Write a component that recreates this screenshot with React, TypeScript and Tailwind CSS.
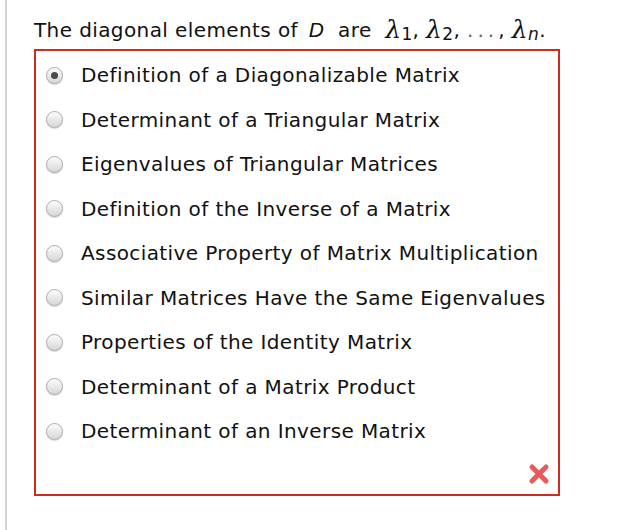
import React from "react";

const options = [
  "Definition of a Diagonalizable Matrix",
  "Determinant of a Triangular Matrix",
  "Eigenvalues of Triangular Matrices",
  "Definition of the Inverse of a Matrix",
  "Associative Property of Matrix Multiplication",
  "Similar Matrices Have the Same Eigenvalues",
  "Properties of the Identity Matrix",
  "Determinant of a Matrix Product",
  "Determinant of an Inverse Matrix",
];

function Radio({ checked }: { checked: boolean }) {
  return (
    <span className="relative flex h-[17px] w-[17px] items-center justify-center rounded-full border border-[#ababab] bg-gradient-to-b from-[#fdfdfd] to-[#d6d6d6] shadow-[0_1px_1px_rgba(0,0,0,0.18)]">
      {checked && <span className="h-[7px] w-[7px] rounded-full bg-[#4a4a4a]" />}
    </span>
  );
}

export default function App() {
  return (
    <div className="h-[530px] w-[622px] bg-white" style={{ fontFamily: '"DejaVu Sans", Verdana, sans-serif' }}>
      <div className="ml-[5px] h-full border-l-2 border-[#d4d4d4] pl-[25px]">
        <div className="flex h-[49px] items-center whitespace-nowrap pl-[2px] pt-[10px] text-[20px] tracking-[0.4px] text-[#111]">
          <span>The diagonal elements of&nbsp;</span>
          <span className="ml-[4px] italic">D</span>
          <span>&nbsp;&nbsp;are&nbsp;&nbsp;</span>
          <span className="italic text-[25px]" style={{ fontFamily: '"DejaVu Serif", serif' }}>λ</span>
          <sub className="text-[17px]">1</sub>
          <span>,&nbsp;</span>
          <span className="italic text-[25px]" style={{ fontFamily: '"DejaVu Serif", serif' }}>λ</span>
          <sub className="text-[17px]">2</sub>
          <span>,&nbsp;</span>
          <span className="text-[#666] tracking-[4px]">...</span>
          <span>,&nbsp;</span>
          <span className="italic text-[25px]" style={{ fontFamily: '"DejaVu Serif", serif' }}>λ</span>
          <sub className="text-[17px] italic">n</sub>
          <span>.</span>
        </div>
        <div className="ml-[2px] flex h-[447px] w-[526px] flex-col border-2 border-[#cf2a1f] pt-[2px]">
          {options.map((o, i) => (
            <div key={o} className="flex h-[44.5px] items-center">
              <div className="ml-[10px] mr-[18px]">
                <Radio checked={i === 0} />
              </div>
              <span className="whitespace-nowrap text-[20px] tracking-[0.4px] text-[#111]">{o}</span>
            </div>
          ))}
          <div className="flex flex-1 items-center justify-end pr-[8px]">
            <svg width="22" height="22" viewBox="0 0 22 22">
              <path d="M4 4 L18 18 M18 4 L4 18" stroke="#e85a5c" strokeWidth="5" strokeLinecap="round" />
            </svg>
          </div>
        </div>
      </div>
    </div>
  );
}
